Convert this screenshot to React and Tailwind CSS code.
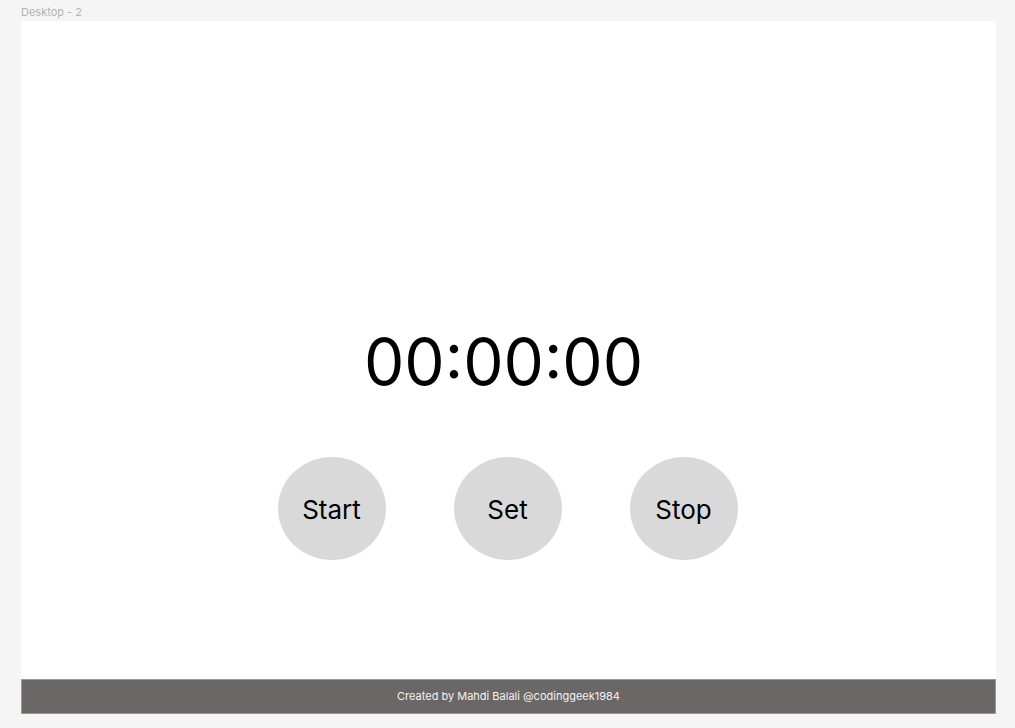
export default function App() {
  const buttons = ["Start", "Set", "Stop"];

  return (
    <div
      className="min-h-[728px] bg-[#f5f5f5] pl-[21px] pr-[19px] pt-[6px]"
      style={{ fontFamily: "Inter, 'Noto Sans', sans-serif" }}
    >
      <div className="h-[15px] text-[11px] leading-[13px] text-[#b3b3b3]">
        Desktop - 2
      </div>
      <div className="w-[975px]">
        <div className="flex h-[658px] flex-col items-center bg-white pt-[302px]">
          <div className="mr-[10px] text-[64px] leading-[77px] text-black">00:00:00</div>
          <div className="mr-[2px] mt-[57px] flex gap-[68px]">
            {buttons.map((b) => (
              <button
                key={b}
                className="flex h-[103px] w-[108px] items-center justify-center rounded-[50%] bg-[#d9d9d9] pt-[2px] text-[26px] text-black"
              >
                {b}
              </button>
            ))}
          </div>
        </div>
        <footer className="flex h-[35px] items-center justify-center border border-[#9a9694] bg-[#6b6766] text-[11px] text-[#f2f2f2]">
          Created by Mahdi Balali @codinggeek1984
        </footer>
      </div>
    </div>
  );
}
